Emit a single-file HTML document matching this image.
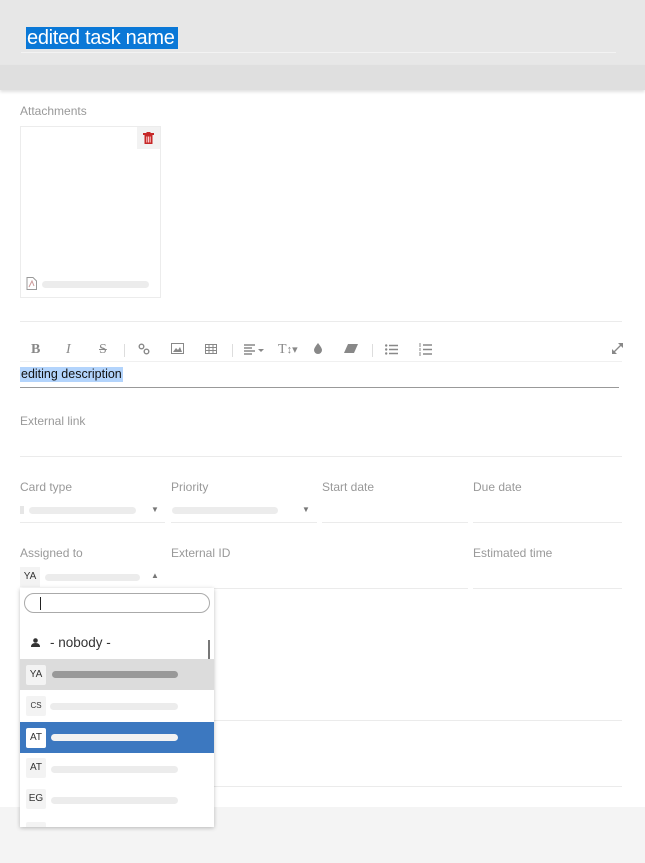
<!DOCTYPE html>
<html><head><style>
*{margin:0;padding:0;box-sizing:border-box}
body{width:645px;height:863px;position:relative;background:#fff;font-family:"Liberation Sans",sans-serif;overflow:hidden}
.a{position:absolute}
.lbl{position:absolute;font-size:12px;color:#999}
.hl{position:absolute;height:1px;background:#ebebeb}
.bar{position:absolute;height:7px;border-radius:4px;background:#ececec}
.tb{position:absolute;top:342px;font-size:13px;color:#888}
.av{position:absolute;left:6px;width:20px;height:20px;background:#f3f3f3;font-size:10px;color:#333;text-align:center;line-height:20px;border-radius:2px}
.row{position:absolute;left:0;width:194px;height:31px}
</style></head><body>
<div class="a" style="left:0;top:0;width:645px;height:65px;background:#e7e7e7"></div>
<div class="a" style="left:0;top:65px;width:645px;height:25px;background:#dfdfdf;box-shadow:0 2px 3px rgba(0,0,0,.12)"></div>
<div class="a" style="left:26px;top:27px;height:22px;width:152px;background:#0a78d7;color:#fff;font-size:20px;line-height:22px;padding:0 1px;letter-spacing:-0.3px;white-space:nowrap;overflow:hidden">edited task name</div>
<div class="a" style="left:21px;top:52px;width:595px;height:1px;background:#f3f3f3"></div>

<div class="lbl" style="left:20px;top:104px">Attachments</div>
<div class="a" style="left:20px;top:126px;width:141px;height:172px;border:1px solid #ececec"></div>
<div class="a" style="left:137px;top:127px;width:23px;height:22px;background:#f2f2f2"></div>
<svg class="a" style="left:143px;top:132px" width="11" height="12" viewBox="0 0 11 12"><rect x="0" y="1" width="11" height="2" fill="#c62828"/><rect x="3.5" y="0" width="4" height="1.5" fill="#c62828"/><rect x="1.5" y="3" width="8" height="9" fill="#c62828"/><rect x="3.3" y="4.5" width="1" height="6" fill="#fcc"/><rect x="5" y="4.5" width="1" height="6" fill="#fcc"/><rect x="6.7" y="4.5" width="1" height="6" fill="#fcc"/></svg>
<svg class="a" style="left:26px;top:277px" width="12" height="13" viewBox="0 0 12 13"><path d="M1 .5h6l3.5 3.5v8.5H1z" fill="none" stroke="#999"/><path d="M3 10l3-6 2 5" fill="none" stroke="#c99"/></svg>
<div class="bar" style="left:42px;top:281px;width:107px"></div>

<div class="hl" style="left:20px;top:321px;width:602px"></div>
<div class="tb" style="left:31px;font-family:'Liberation Serif',serif;font-weight:bold;font-size:14px">B</div>
<div class="tb" style="left:66px;font-family:'Liberation Serif',serif;font-style:italic;font-size:14px">I</div>
<div class="tb" style="left:99px;font-family:'Liberation Serif',serif;text-decoration:line-through;font-size:14px">S</div>
<div class="a" style="left:124px;top:344px;width:1px;height:13px;background:#ddd"></div>
<svg class="a" style="left:138px;top:343px" width="12" height="12"><circle cx="3.5" cy="3.5" r="2.3" fill="none" stroke="#888" stroke-width="1.4"/><circle cx="8.5" cy="8.5" r="2.3" fill="none" stroke="#888" stroke-width="1.4"/></svg>
<svg class="a" style="left:171px;top:343px" width="13" height="11"><rect x=".5" y=".5" width="12" height="10" fill="none" stroke="#888"/><path d="M2 9l3-4 2 2 2-3 2 5z" fill="#888"/></svg>
<svg class="a" style="left:205px;top:344px" width="12" height="10"><rect x=".5" y=".5" width="11" height="9" fill="none" stroke="#888"/><path d="M0 3.5h12M0 6.5h12M4 0v10M8 0v10" stroke="#888"/></svg>
<div class="a" style="left:232px;top:344px;width:1px;height:13px;background:#ddd"></div>
<svg class="a" style="left:244px;top:344px" width="22" height="11"><path d="M0 1h11M0 4h8M0 7h11M0 10h8" stroke="#888" stroke-width="1.4"/><path d="M14 5h6l-3 3z" fill="#888"/></svg>
<div class="tb" style="left:278px;font-size:14px;font-family:'Liberation Serif',serif">T<span style="font-size:11px">↕▾</span></div>
<svg class="a" style="left:314px;top:343px" width="8" height="11"><path d="M4 0q4 5 4 7a4 4 0 0 1-8 0q0-2 4-7z" fill="#888"/></svg>
<svg class="a" style="left:344px;top:344px" width="14" height="9"><path d="M4 0h10l-4 9H0z" fill="#888"/></svg>
<div class="a" style="left:372px;top:344px;width:1px;height:13px;background:#ddd"></div>
<svg class="a" style="left:385px;top:344px" width="13" height="11"><path d="M4 1.5h9M4 5.5h9M4 9.5h9" stroke="#888" stroke-width="1.4"/><circle cx="1.2" cy="1.5" r="1.2" fill="#888"/><circle cx="1.2" cy="5.5" r="1.2" fill="#888"/><circle cx="1.2" cy="9.5" r="1.2" fill="#888"/></svg>
<svg class="a" style="left:419px;top:343px" width="13" height="13"><path d="M4 2h9M4 6.5h9M4 11h9" stroke="#888" stroke-width="1.4"/><path d="M1 0v4M1 5v3M1 9v4" stroke="#888"/></svg>
<svg class="a" style="left:612px;top:343px" width="11" height="11"><path d="M6 0h5v5zM5 11H0V6z" fill="#888"/><path d="M9 2L2 9" stroke="#888" stroke-width="1.3"/></svg>
<div class="hl" style="left:20px;top:361px;width:602px;background:#f0f0f0"></div>
<div class="a" style="left:20px;top:367px;height:15px;background:#b3d4fc;font-size:12.5px;line-height:15px;color:#111;padding:0 1px">editing description</div>
<div class="a" style="left:20px;top:387px;width:599px;height:1px;background:#999"></div>

<div class="lbl" style="left:20px;top:414px">External link</div>
<div class="hl" style="left:20px;top:456px;width:602px"></div>

<div class="lbl" style="left:20px;top:480px">Card type</div>
<div class="lbl" style="left:171px;top:480px">Priority</div>
<div class="lbl" style="left:322px;top:480px">Start date</div>
<div class="lbl" style="left:473px;top:480px">Due date</div>
<div class="a" style="left:20px;top:506px;width:4px;height:8px;background:#e6e6e6"></div>
<div class="bar" style="left:29px;top:507px;width:107px"></div>
<div class="a" style="left:151px;top:505px;font-size:8px;color:#777">▼</div>
<div class="bar" style="left:172px;top:507px;width:106px"></div>
<div class="a" style="left:302px;top:505px;font-size:8px;color:#777">▼</div>
<div class="hl" style="left:20px;top:522px;width:145px"></div>
<div class="hl" style="left:171px;top:522px;width:146px"></div>
<div class="hl" style="left:322px;top:522px;width:146px"></div>
<div class="hl" style="left:473px;top:522px;width:149px"></div>

<div class="lbl" style="left:20px;top:546px">Assigned to</div>
<div class="lbl" style="left:171px;top:546px">External ID</div>
<div class="lbl" style="left:473px;top:546px">Estimated time</div>
<div class="a" style="left:20px;top:567px;width:20px;height:20px;background:#f3f3f3;font-size:10px;line-height:20px;text-align:center;color:#333">YA</div>
<div class="bar" style="left:45px;top:574px;width:95px"></div>
<div class="a" style="left:151px;top:571px;font-size:8px;color:#777">▲</div>
<div class="hl" style="left:171px;top:588px;width:297px"></div>
<div class="hl" style="left:473px;top:588px;width:149px"></div>
<div class="hl" style="left:214px;top:720px;width:408px"></div>
<div class="hl" style="left:214px;top:786px;width:408px"></div>
<div class="a" style="left:0;top:807px;width:645px;height:56px;background:#f4f4f4"></div>

<div class="a" style="left:20px;top:588px;width:194px;height:239px;background:#fff;box-shadow:0 1px 4px rgba(0,0,0,.25);overflow:hidden">
 <div class="a" style="left:4px;top:5px;width:186px;height:20px;border:1px solid #aaa;border-radius:10px"></div>
 <div class="a" style="left:20px;top:9px;width:1px;height:13px;background:#222"></div>
 <svg class="a" style="left:11px;top:50px" width="9" height="9"><circle cx="4.5" cy="2.5" r="2.3" fill="#333"/><path d="M0 9q0-4 4.5-4t4.5 4z" fill="#333"/></svg>
 <div class="a" style="left:30px;top:47px;font-size:13.5px;color:#333;line-height:16px">- nobody -</div>
 <div class="a" style="left:188px;top:52px;width:2px;height:19px;background:#777"></div>
 <div class="row" style="top:71px;background:#dcdcdc"><div class="av" style="top:6px">YA</div><div class="bar" style="left:32px;top:12px;width:126px;background:#999"></div></div>
 <div class="row" style="top:102px"><div class="av" style="top:6px;font-size:8px">CS</div><div class="bar" style="left:30px;top:13px;width:128px"></div></div>
 <div class="row" style="top:134px;background:#3c78c0"><div class="av" style="top:6px;background:#fff">AT</div><div class="bar" style="left:31px;top:12px;width:127px;background:#f2f2f2"></div></div>
 <div class="row" style="top:165px"><div class="av" style="top:5px">AT</div><div class="bar" style="left:31px;top:13px;width:127px"></div></div>
 <div class="row" style="top:197px"><div class="av" style="top:4px">EG</div><div class="bar" style="left:31px;top:12px;width:127px"></div></div>
 <div class="av" style="top:234px"></div>
</div>
</body></html>
